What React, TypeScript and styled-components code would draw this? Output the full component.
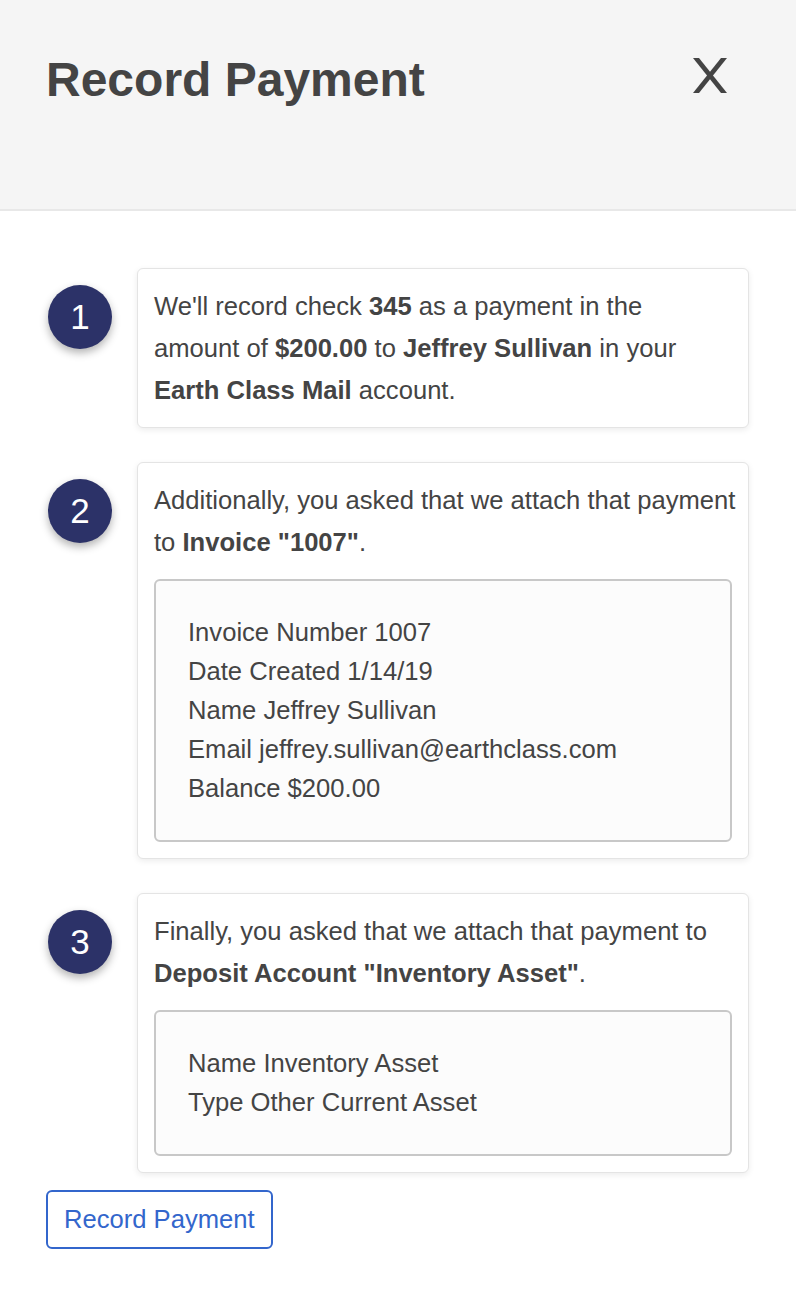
import React from "react";
import styled, { createGlobalStyle } from "styled-components";

const Global = createGlobalStyle`
  html, body { margin: 0; padding: 0; background: #fff; }
  body { font-family: "Liberation Sans", Arial, sans-serif; color: #444; }
  * { box-sizing: border-box; }
`;

const Header = styled.header`
  background: #f5f5f5;
  border-bottom: 2px solid #e8e8e8;
  height: 211px;
  display: flex;
  justify-content: space-between;
  align-items: flex-start;
  padding: 51px 67px 0 46px;
`;

const Title = styled.h1`
  margin: 0;
  font-size: 48px;
  line-height: 58px;
  font-weight: 700;
  color: #444;
`;

const CloseButton = styled.button`
  border: none;
  background: transparent;
  padding: 0;
  margin-top: 7px;
  width: 38px;
  height: 35px;
  cursor: pointer;
  display: block;
  svg { display: block; }
`;

const Main = styled.main`
  padding: 57px 47px 0 48px;
  display: flex;
  flex-direction: column;
  gap: 34px;
`;

const Step = styled.section`
  display: grid;
  grid-template-columns: 64px 1fr;
  column-gap: 25px;
  align-items: start;
`;

const Badge = styled.div`
  margin-top: 17px;
  width: 64px;
  height: 64px;
  border-radius: 50%;
  background: #2c3268;
  color: #fff;
  font-size: 35px;
  display: flex;
  align-items: center;
  justify-content: center;
  box-shadow: 0 4px 8px rgba(0, 0, 0, 0.3);
`;

const Card = styled.div`
  background: #fff;
  border: 1px solid #e4e4e4;
  border-radius: 6px;
  padding: 16px;
  box-shadow: 0 2px 6px rgba(0, 0, 0, 0.08);
`;

const Text = styled.p<{ $overhang?: number }>`
  margin: 0 ${(p) => -(p.$overhang ?? 0)}px 0 0;
  font-size: 25.6px;
  line-height: 42px;
  color: #444;
  b { font-weight: 700; }
`;

const Details = styled.div`
  margin-top: 16px;
  background: #fcfcfc;
  border: 2px solid #c8c8c8;
  border-radius: 6px;
  padding: 32px;
`;

const DetailLine = styled.div`
  font-size: 25.6px;
  line-height: 39px;
  color: #444;
`;

const Footer = styled.div`
  padding: 17px 48px 40px 46px;
`;

const RecordButton = styled.button`
  font-family: "Liberation Sans", Arial, sans-serif;
  font-size: 25.6px;
  line-height: 39px;
  color: #3366cc;
  background: #fff;
  border: 2px solid #3366cc;
  border-radius: 6px;
  padding: 8px 16px;
  cursor: pointer;
`;

export default function App() {
  return (
    <>
      <Global />
      <Header>
        <Title>Record Payment</Title>
        <CloseButton aria-label="Close">
          <svg width="38" height="35" viewBox="0 0 38 35">
            <path d="M2 0 L8 0 L36 35 L30 35 Z" fill="#444" />
            <path d="M36 0 L30 0 L2 35 L8 35 Z" fill="#444" />
          </svg>
        </CloseButton>
      </Header>
      <Main>
        <Step>
          <Badge>1</Badge>
          <Card>
            <Text>
              We'll record check <b>345</b> as a payment in the amount of <b>$200.00</b> to{" "}
              <b>Jeffrey Sullivan</b> in your <b>Earth Class Mail</b> account.
            </Text>
          </Card>
        </Step>
        <Step>
          <Badge>2</Badge>
          <Card>
            <Text $overhang={8}>
              Additionally, you asked that we attach that payment to <b>Invoice "1007"</b>.
            </Text>
            <Details>
              <DetailLine>Invoice Number 1007</DetailLine>
              <DetailLine>Date Created 1/14/19</DetailLine>
              <DetailLine>Name Jeffrey Sullivan</DetailLine>
              <DetailLine>Email jeffrey.sullivan@earthclass.com</DetailLine>
              <DetailLine>Balance $200.00</DetailLine>
            </Details>
          </Card>
        </Step>
        <Step>
          <Badge>3</Badge>
          <Card>
            <Text>
              Finally, you asked that we attach that payment to <b>Deposit Account "Inventory Asset"</b>.
            </Text>
            <Details>
              <DetailLine>Name Inventory Asset</DetailLine>
              <DetailLine>Type Other Current Asset</DetailLine>
            </Details>
          </Card>
        </Step>
      </Main>
      <Footer>
        <RecordButton>Record Payment</RecordButton>
      </Footer>
    </>
  );
}
